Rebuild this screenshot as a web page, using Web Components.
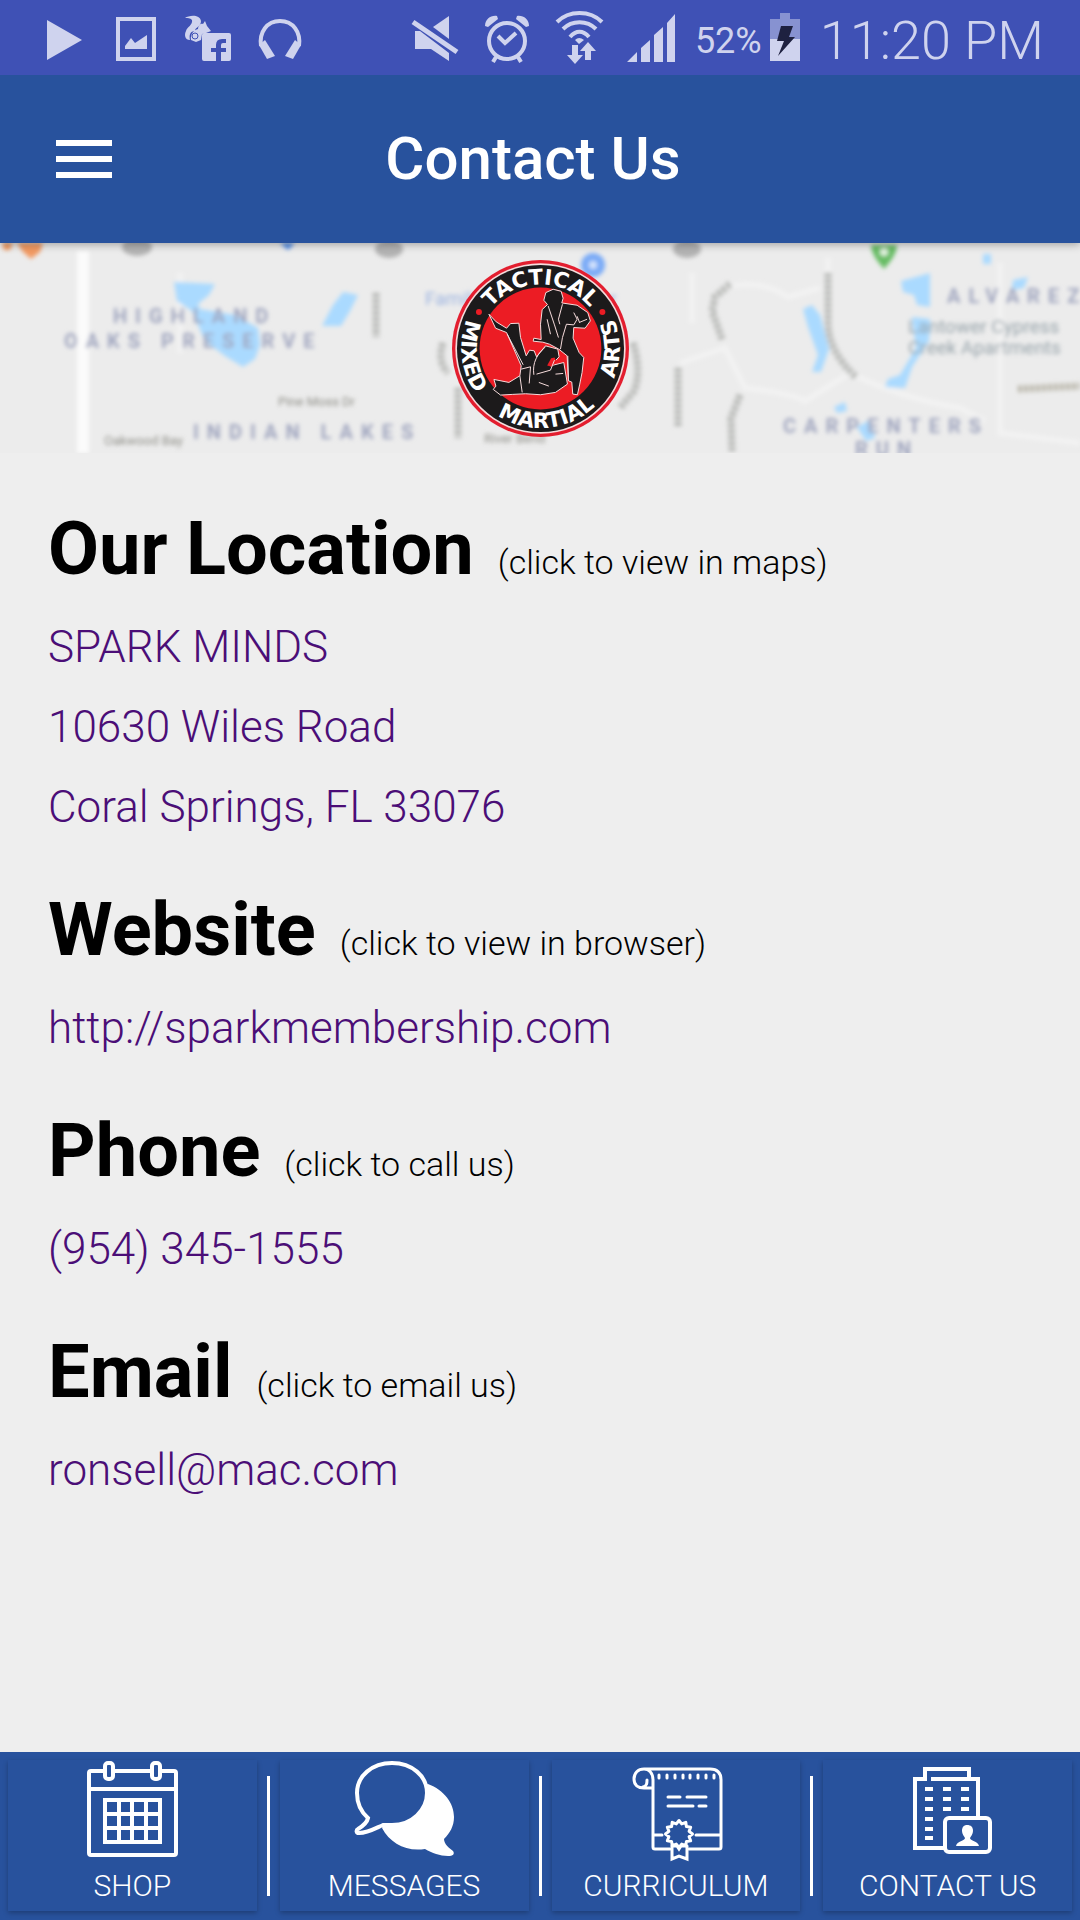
<!DOCTYPE html>
<html lang="en">
<head>
<meta charset="utf-8">
<meta name="viewport" content="width=device-width, initial-scale=1">
<title>Contact Us</title>
<style>
  :root{ --brand:#28529d; --page:#eeeeee; --link:#4b0e77; --status:#3f51b5; --status-ink:#cfd3ee; }
  html,body{ margin:0; }
  body{ min-height:100vh; display:flex; flex-direction:column; background:var(--page); font-family:Roboto,"Liberation Sans",sans-serif; color:#000; }
  main{ flex:1; display:flex; flex-direction:column; gap:39px; padding:52px 48px; }
</style>
</head>
<body>
  <status-bar></status-bar>
  <app-header>Contact Us</app-header>
  <map-banner></map-banner>
  <main>
    <contact-section heading="Our Location" hint="(click to view in maps)">
      <a href="#maps">SPARK MINDS<br>10630 Wiles Road<br>Coral Springs, FL 33076</a>
    </contact-section>
    <contact-section heading="Website" hint="(click to view in browser)">
      <a href="http://sparkmembership.com">http://sparkmembership.com</a>
    </contact-section>
    <contact-section heading="Phone" hint="(click to call us)">
      <a href="tel:9543451555">(954) 345-1555</a>
    </contact-section>
    <contact-section heading="Email" hint="(click to email us)">
      <a href="mailto:ronsell@mac.com">ronsell@mac.com</a>
    </contact-section>
  </main>
  <tab-bar>
    <tab-button icon="calendar">SHOP</tab-button>
    <tab-button icon="chat">MESSAGES</tab-button>
    <tab-button icon="scroll">CURRICULUM</tab-button>
    <tab-button icon="office">CONTACT US</tab-button>
  </tab-bar>

<script>
// small helper: every element renders one template into an open shadow root
class BaseElement extends HTMLElement {
  constructor() {
    super();
    this._shadow = this.attachShadow({ mode: 'open' });
  }
  _render(html) {
    const tpl = document.createElement('template');
    tpl.innerHTML = html;
    this._shadow.replaceChildren(tpl.content.cloneNode(true));
  }
}

class StatusBar extends BaseElement {
  connectedCallback() {
    this._render(`
      <style>
        :host{ display:flex; justify-content:space-between; align-items:center; height:75px; padding:0 36px 0 40px; background:var(--status); color:var(--status-ink); position:relative; z-index:2; }
        .group{ display:flex; align-items:center; gap:24px; }
        .right{ gap:20px; }
        .power{ display:flex; align-items:center; gap:8px; }
        svg{ display:block; width:48px; height:51px; overflow:visible; fill:currentColor; }
        svg.battery{ width:30px; }
        .line{ fill:none; stroke:currentColor; stroke-width:4; }
        .pct, .time{ padding-top:6px; }
        .pct{ font-size:36px; line-height:48px; }
        .time{ font-size:54px; line-height:64px; font-weight:300; }
      </style>
      <div class="group">
        <svg viewBox="0 0 48 51"><path d="M7 8 42 28 7 48Z"/></svg>
        <svg viewBox="0 0 48 51"><path class="line" d="M6 7H42V47H6Z"/><path d="M13 37V34L19 26 23 31 35 23V37Z"/></svg>
        <svg viewBox="0 0 48 51">
          <path d="M1 6C5 3 16 2 17 9 17 15 11 15 11 19 6 19 5 23 6 28 1 28 0 23 2 19 3 15 9 13 8 8 6 6 4 6 1 6Z"/>
          <path d="M14 17C14 13 17 11 19 12L21 9 23 14 27 19 22 21 18 22 17 28 12 30 7 28C6 22 10 18 14 17Z"/>
          <circle cx="11" cy="24" r="3" fill="none" stroke="var(--status)" stroke-width="1"/>
          <path fill-rule="evenodd" d="M20 21H45Q47 21 47 23V47Q47 49 45 49H37V40H42V36H37V33Q37 31 39 31H42V27H38Q32 27 32 33V36H27V40H32V49H20Q18 49 18 47V23Q18 21 20 21Z"/>
        </svg>
        <svg viewBox="0 0 48 51"><path class="line" d="M5 34C3 20 11 9 24 9S45 20 43 34"/><path d="M9 28 19 44 11 47 3 33Z"/><path d="M39 28 29 44 37 47 45 33Z"/></svg>
      </div>
      <div class="group right">
        <div class="group">
          <svg viewBox="0 0 48 51"><path d="M38 4V27L22 15Z"/><path d="M4 19H9L38 41V49L20 37H4Z"/><path class="line" style="stroke-width:5" d="M2 10 46 40"/></svg>
          <svg viewBox="0 0 48 51">
            <circle class="line" cx="24" cy="29" r="18"/>
            <path class="line" d="M15 24 22 31 33 21M13 45 10 50M35 45 38 50"/>
            <path d="M2 14C2 7 8 3 14 4L15 7 5 15Z"/><path d="M46 14C46 7 40 3 34 4L33 7 43 15Z"/>
          </svg>
          <svg viewBox="0 0 48 51">
            <path class="line" d="M2 10C14-2 35-2 47 10M8 17C17 8 32 8 41 17M15 25C21 18 28 18 34 25"/>
            <path d="M20 28Q24 24 29 28L24 32Z"/>
            <path d="M17 33H23V43H28L20 52 12 43H17Z"/><path d="M30 48V39H25L33 30 41 39H36V48Z"/>
          </svg>
          <svg viewBox="0 0 48 51"><path d="M0 50 10 40V50ZM14 36 23 28V50H14ZM27 23 36 15V50H27ZM40 11 48 2V50H40Z"/></svg>
        </div>
        <div class="power">
          <span class="pct">52%</span>
          <svg class="battery" viewBox="0 0 30 51"><path opacity=".5" d="M0 7H10V1H20V7H30V27H0Z"/><path d="M0 27H30V49H0Z"/><path fill="#1e2140" d="M11 14H23L19 25H25L8 44 14 29H7Z"/></svg>
        </div>
        <span class="time">11:20 PM</span>
      </div>
    `);
  }
}

class AppHeader extends BaseElement {
  connectedCallback() {
    this._render(`
      <style>
        :host{ display:flex; align-items:center; height:168px; padding:0 70px 0 56px; background:var(--brand); color:#fff; box-shadow:0 2px 8px rgba(0,0,0,.3); position:relative; z-index:1; }
        button{ display:flex; flex-direction:column; gap:10px; width:56px; padding:0; border:0; background:none; cursor:pointer; }
        button span{ height:6px; background:#fff; }
        h1{ flex:1; margin:0 56px 0 0; font-size:60px; line-height:72px; font-weight:500; text-align:center; }
      </style>
      <button type="button" aria-label="Open menu"><span></span><span></span><span></span></button>
      <h1><slot></slot></h1>
    `);
  }
}

class MapBanner extends BaseElement {
  connectedCallback() {
    this._render(`
      <style>
        :host{ display:grid; height:210px; overflow:hidden; background:#ececec; }
        svg{ grid-area:1 / 1; place-self:center; }
        .map{ width:100%; height:210px; }
        .logo{ width:177px; height:177px; }
        .area{ font-size:20px; font-weight:700; letter-spacing:8px; fill:#a0a6bf; }
        .place{ font-size:19px; fill:#98a4ab; }
        .street{ font-size:13px; fill:#8f8f88; }
        .ring{ font-family:"DejaVu Sans",sans-serif; font-size:64px; font-weight:700; fill:#fff; text-anchor:middle; }
      </style>
      <svg class="map" viewBox="0 0 1080 210" preserveAspectRatio="xMidYMid slice" aria-hidden="true">
        <g filter="url(#soft)">
          <g fill="none" stroke="#f3f3f3" stroke-width="5">
            <path stroke="#fbfbfb" stroke-width="12" d="M83 8V210"/>
            <path d="M692 30V80M724 45Q760 35 788 54L820 45M680 120 725 105 745 145Q790 150 805 158L850 130Q900 155 960 165L985 178M828 15V30M1000 20V190L1080 200M180 30V110"/>
          </g>
          <g fill="#aadaff">
            <path d="M174 39 215 41 209 52 198 61 200 66 235 72 258 85 260 102 255 116 243 124 225 113 205 98 192 68 177 58Z"/>
            <path d="M343 49 358 52 350 68 341 83 322 83 333 62Z"/>
            <path d="M803 66 812 62 820 72 829 106 821 129 812 129 818 112 808 84Z"/>
            <path d="M901 38 930 30V64L917 62 914 52 903 49ZM912 74 930 76 929 98 912 124 905 145 885 144 888 136 900 132 916 105Z"/>
            <path d="M834 164 845 159 847 168 837 170ZM857 184 870 177 875 195 866 198ZM1013 37 1028 34 1024 45 1012 47ZM983 11H991V21H983Z"/>
          </g>
          <path fill="#f29a62" d="M17 0H43L40 9 31 16 23 9ZM2 0H13L10 7H4Z"/>
          <path fill="#4f8ce8" d="M280 0H295L288 7Z"/>
          <g fill="#b3b3b3"><ellipse cx="137" cy="4" rx="15" ry="9"/><ellipse cx="389" cy="6" rx="14" ry="9"/><ellipse cx="687" cy="6" rx="14" ry="9"/></g>
          <path fill="#68bd65" d="M871 2H897Q897 12 884 26 871 12 871 2Z"/><circle cx="884" cy="9" r="4" fill="#e4f4e2"/>
          <circle cx="593" cy="22" r="12" fill="#7aabf7"/><circle cx="593" cy="22" r="4" fill="#d4e4fc"/>
          <g fill="none" stroke="#b2b4b1" stroke-width="7" stroke-dasharray="4 2">
            <path d="M376 50V94M443 100Q437 118 448 130M458 145V195M730 41 715 54 712 68 722 96M828 30V80Q828 108 856 134M740 152 731 175 732 208M678 125V184M633 100Q642 128 634 148L620 165"/>
            <path d="M1018 146 1080 143" stroke="#b7b4a7"/>
          </g>
          <text class="area" x="113" y="80">HIGHLAND</text>
          <text class="area" x="64" y="105">OAKS PRESERVE</text>
          <text class="area" x="193" y="196">INDIAN LAKES</text>
          <text class="area" x="947" y="60">ALVAREZ</text>
          <text class="area" x="783" y="190">CARPENTERS</text>
          <text class="area" x="855" y="213">RUN</text>
          <text class="place" x="908" y="90">Lantower Cypress</text>
          <text class="place" x="908" y="111">Creek Apartments</text>
          <text class="place" x="425" y="62" style="fill:#9db4e0">Family</text>
          <text class="place" x="600" y="62" style="fill:#9db4e0">er</text>
          <text class="street" x="278" y="163">Pine Moss Dr</text>
          <text class="street" x="104" y="202">Oakwood Bay</text>
          <text class="street" x="484" y="200">River Bend</text>
        </g>
        <defs><filter id="soft" x="-5%" y="-5%" width="110%" height="110%"><feGaussianBlur stdDeviation="2"/></filter></defs>
      </svg>
      <svg class="logo" viewBox="64 57 532 532" role="img" aria-label="Tactical Mixed Martial Arts">
        <defs>
          <path id="top" d="M137 323A193 193 0 0 1 523 323"/>
          <path id="left" d="M189 131A239 239 0 0 0 189 515"/>
          <path id="bottom" d="M91 323A239 239 0 0 0 569 323"/>
          <path id="right" d="M471 515A239 239 0 0 0 471 131"/>
        </defs>
        <circle cx="330" cy="323" r="266" fill="#e31e2f"/>
        <circle cx="330" cy="323" r="256" fill="#f4dcdc"/>
        <circle cx="330" cy="323" r="251" fill="#1c1a1b"/>
        <circle cx="330" cy="323" r="183" fill="#ec1c24"/>
        <circle cx="145" cy="213" r="9" fill="#ec1c24"/>
        <circle cx="516" cy="213" r="9" fill="#ec1c24"/>
        <text class="ring"><textPath href="#top" startOffset="50%">TACTICAL</textPath></text>
        <text class="ring"><textPath href="#left" startOffset="56%">MIXED</textPath></text>
        <text class="ring"><textPath href="#bottom" startOffset="53%">MARTIAL</textPath></text>
        <text class="ring"><textPath href="#right" startOffset="50%">ARTS</textPath></text>
        <g fill="#1c1a1b" stroke="#f6dcdc" stroke-width="3" stroke-linejoin="round">
          <path d="M175 220 197 243 228 262 240 248 265 247 270 290 287 345 297 328 311 330 318 348 345 315 382 325 386 348 360 375 400 365 411 430 375 455 330 462 285 459 245 461 210 463 188 446 196 436 190 416 235 425 268 405 272 375 228 275 195 262Z"/>
          <path d="M340 178 346 155 368 145 392 151 398 172 394 186 440 193 472 215 480 240 464 262 430 260 428 292 446 335 460 350 455 395 448 430 441 462 427 460 424 424 414 420 410 345 385 325 357 310 337 304 308 301 310 292 332 296 330 250 335 206 351 191Z"/>
        </g>
        <path fill="#ec1c24" d="M350 374 362 352 372 350 378 362 364 378Z"/>
        <path fill="none" stroke="#f6dcdc" stroke-width="3" d="M353 195 372 252 384 290M396 190 384 235 388 250M430 215 440 235 430 252 408 250 396 290 390 325M350 235 360 280M345 318C320 340 305 365 310 402M268 405 275 455M272 385 300 378 296 428M318 400 360 388 372 358M375 400 398 398M325 425 355 436M446 245 470 235M440 226 447 244M230 280 278 372M414 420 412 345"/>
      </svg>
    `);
  }
}

class ContactSection extends BaseElement {
  connectedCallback() {
    this._render(`
      <style>
        :host{ display:block; }
        header{ display:flex; align-items:baseline; gap:24px; margin-bottom:14px; }
        h2{ margin:0; font-size:74px; line-height:88px; font-weight:700; }
        .hint{ font-size:34px; line-height:48px; font-weight:300; }
        ::slotted(a){ display:block; width:fit-content; font-size:44px; line-height:80px; font-weight:300; color:var(--link); text-decoration:none; }
      </style>
      <header><h2></h2><span class="hint"></span></header>
      <slot></slot>
    `);
    this._shadow.querySelector('h2').textContent = this.getAttribute('heading');
    this._shadow.querySelector('.hint').textContent = this.getAttribute('hint');
  }
}

const TAB_ICONS = {
  calendar: `
    <rect x="7" y="11" width="87" height="84" rx="2"/><path d="M7 29H94"/>
    <rect class="knock" x="23" y="3" width="8" height="16" rx="3"/><rect class="knock" x="70" y="3" width="8" height="16" rx="3"/>
    <path d="M23 40H78V82H23ZM37 40V82M50 40V82M64 40V82M23 54H78M23 68H78"/>`,
  chat: `
    <path class="solid" d="M74 24C90 30 100 43 100 57 100 66 96 73 90 79 90 84 95 88 99 91 101 94 99 96 94 96 86 96 78 93 71 89 52 92 36 83 28 68L40 40Z"/>
    <path class="knock" d="M14 58C6 51 3 42 3 33 3 16 18 3 38 3S73 16 73 33 58 65 38 65C35 65 32 65 29 65 22 68 14 73 5 73 2 73 2 70 4 69 9 66 13 63 14 58Z"/>`,
  scroll: `
    <g stroke-width="3" stroke-linecap="round">
      <path d="M18 9H84Q95 9 95 20V87Q95 89 93 89H63M44 89H29Q27 89 27 87V20C27 13 23 9 18 9 12 9 8 13 8 19S12 28 18 28H27M17 27C21 26 21 23 21 20"/>
      <path d="M33 15V18M41 15V18M49 15V18M57 15V18M64 15V18M72 15V18M80 15V18M88 15V18"/>
      <path d="M42 37H54M61 37H80M42 46H67M73 46H80M28 75H36M70 75H94"/>
      <path d="M46 86V99L53 96 61 99V86M48 86 51 86 53 89 55 86 59 86"/>
      <path class="knock" d="M66.500 74 63.100 76.700 64.700 80.800 60.400 81.400 59.800 85.700 55.700 84.100 53 87.500 50.300 84.100 46.200 85.700 45.600 81.400 41.300 80.800 42.900 76.700 39.500 74 42.900 71.300 41.300 67.200 45.600 66.600 46.200 62.300 50.300 63.900 53 60.500 55.700 63.900 59.800 62.300 60.400 66.600 64.700 67.200 63.100 71.300Z" stroke-linejoin="round"/>
    </g>`,
  office: `
    <path d="M27 21V9H71V19M33 19H80V57M27 19H17V88H46"/>
    <path d="M27 29H35M27 39H35M27 49H35M27 59H35M27 69H35M27 78H35M45 29H53M45 39H53M45 49H53M63 29H71M63 39H71M63 49H71"/>
    <rect x="47" y="58" width="45" height="34" rx="4"/>
    <path class="solid" d="M69 65C73 65 75 67 75 71 75 74 73 76 72 78 72 81 80 81 81 86H58C59 81 67 81 67 78 66 76 64 74 64 71 64 67 66 65 69 65Z"/>`
};

class TabButton extends BaseElement {
  connectedCallback() {
    this._render(`
      <style>
        :host{ display:block; flex:1 1 0; min-width:0; }
        button{ display:flex; flex-direction:column; align-items:center; gap:8px; width:100%; height:151px; padding:0; border:0; background:var(--brand); color:#fff; font:300 30px/36px Roboto,"Liberation Sans",sans-serif; box-shadow:0 2px 5px rgba(0,0,0,.26); cursor:pointer; }
        svg{ display:block; width:100px; height:100px; overflow:visible; fill:none; stroke:#fff; stroke-width:4; }
        .knock{ fill:var(--brand); }
        .solid{ fill:#fff; stroke:none; }
      </style>
      <button type="button">
        <svg viewBox="0 0 100 100" aria-hidden="true">${TAB_ICONS[this.getAttribute('icon')]}</svg>
        <span><slot></slot></span>
      </button>
    `);
  }
}

class TabBar extends BaseElement {
  connectedCallback() {
    this._render(`
      <style>
        :host{ display:block; }
        nav{ display:flex; gap:10px; padding:8px 8px 9px; background:var(--brand); }
        ::slotted(.divider){ flex:none; width:3px; height:120px; margin-top:16px; background:#fff; }
      </style>
      <nav><slot></slot></nav>
    `);
    // one divider between each pair of tabs
    Array.from(this.querySelectorAll('tab-button')).slice(1).forEach(tab => {
      const line = document.createElement('span');
      line.className = 'divider';
      tab.before(line);
    });
  }
}

customElements.define('status-bar', StatusBar);
customElements.define('app-header', AppHeader);
customElements.define('map-banner', MapBanner);
customElements.define('contact-section', ContactSection);
customElements.define('tab-button', TabButton);
customElements.define('tab-bar', TabBar);
</script>
</body>
</html>
